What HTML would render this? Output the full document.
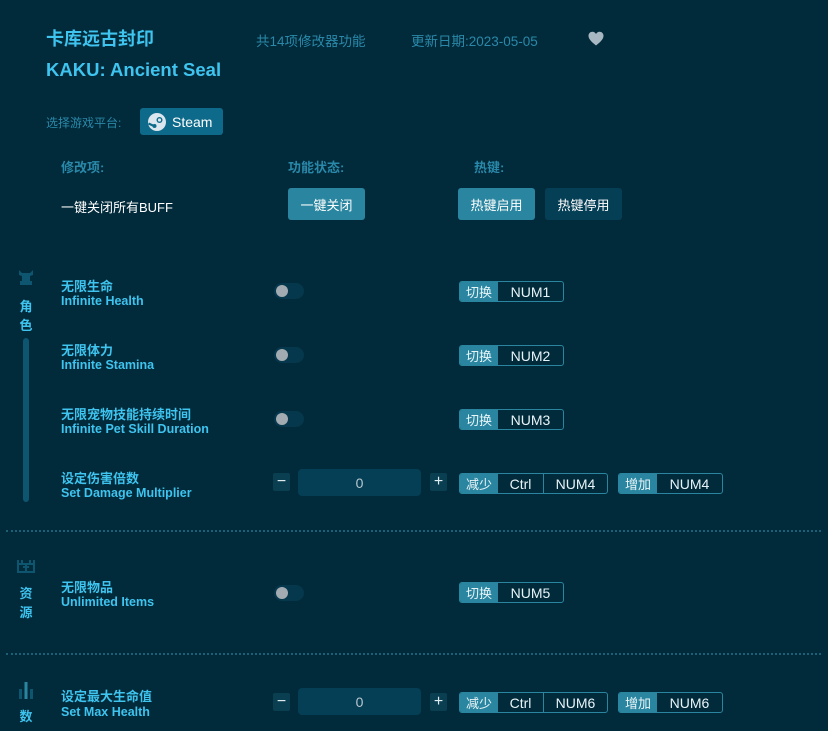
<!DOCTYPE html>
<html><head><meta charset="utf-8"><style>
*{margin:0;padding:0;box-sizing:border-box}
body{width:828px;height:731px;background:#012a3a;font-family:"Liberation Sans","Noto Sans CJK SC",sans-serif;position:relative;overflow:hidden;color:#fff}
.a{position:absolute;white-space:nowrap}
.t{color:#3ec4ef;font-weight:bold;font-size:18px}
.m{color:#2a89aa;font-size:13.5px}
.h{color:#2a89aa;font-size:13px;font-weight:bold}
.cn{color:#3ec4ef;font-size:13px;font-weight:bold}
.en{color:#3ec4ef;font-size:12.5px;font-weight:bold}
.btn{position:absolute;border-radius:3px;color:#fff;font-size:13px;display:flex;align-items:center;justify-content:center}
.tg{position:absolute;width:30px;height:16px;border-radius:8px;background:#05384c}
.tg:after{content:"";position:absolute;left:2px;top:2px;width:12px;height:12px;border-radius:6px;background:#a3abb2}
.hk{position:absolute;height:21px;border:1px solid #2a86a0;border-radius:3px;display:flex;font-size:14px;color:#e8f4f8;overflow:hidden}
.hk span{display:flex;align-items:center;justify-content:center;height:100%}
.hk .l{background:#2a86a0;width:38px;font-size:13px}
.hk .s{border-left:1px solid #2a86a0}
.sq{position:absolute;width:17px;height:18px;background:#0a3f52;border-radius:2px;color:#e0eef2;font-size:16px;display:flex;align-items:center;justify-content:center}
.inp{position:absolute;width:123px;height:27px;background:#053f55;border-radius:4px;color:#b8c8d0;font-size:14px;display:flex;align-items:center;justify-content:center}
.dv{position:absolute;left:6px;width:815px;border-top:2px dotted #1e5f78}
.sc{position:absolute;left:18px;width:16px;text-align:center;color:#3ec4ef;font-size:13px;font-weight:bold;line-height:19px}
</style></head><body>
<div class="a t" style="left:46px;top:25px">卡库远古封印</div>
<div class="a t" style="left:46px;top:59px;font-size:18.5px">KAKU: Ancient Seal</div>
<div class="a m" style="left:256px;top:30px">共14项修改器功能</div>
<div class="a m" style="left:411px;top:30px">更新日期:2023-05-05</div>
<svg class="a" style="left:588px;top:31px" width="16" height="15" viewBox="0 0 16 15"><path d="M8 14.5C3 10.5 0.5 8 0.5 4.8 0.5 2.5 2.3 0.8 4.4 0.8 6 0.8 7.3 1.8 8 3 8.7 1.8 10 0.8 11.6 0.8 13.7 0.8 15.5 2.5 15.5 4.8 15.5 8 13 10.5 8 14.5Z" fill="#a8b8c2"/></svg>
<div class="a m" style="left:46px;top:114px;font-size:12px">选择游戏平台:</div>
<div class="btn" style="left:140px;top:108px;width:83px;height:27px;background:#0e6a8a;font-size:14px;justify-content:flex-start;padding-left:8px"><svg width="18" height="18" viewBox="0 0 18 18" style="margin-right:6px"><circle cx="9" cy="9" r="9" fill="#dce6ee"/><circle cx="11.5" cy="7" r="3" fill="#0e6a8a"/><circle cx="11.5" cy="7" r="1.6" fill="#dce6ee"/><path d="M0.5 10.5L6 13" stroke="#0e6a8a" stroke-width="2.2"/><circle cx="6.5" cy="13" r="2" fill="#0e6a8a"/></svg>Steam</div>
<div class="a h" style="left:61px;top:157px">修改项:</div>
<div class="a h" style="left:288px;top:157px">功能状态:</div>
<div class="a h" style="left:474px;top:157px">热键:</div>
<div class="a" style="left:61px;top:197px;font-size:13px">一键关闭所有BUFF</div>
<div class="btn" style="left:288px;top:188px;width:77px;height:32px;background:#2a86a0">一键关闭</div>
<div class="btn" style="left:458px;top:188px;width:77px;height:32px;background:#2a86a0">热键启用</div>
<div class="btn" style="left:545px;top:188px;width:77px;height:32px;background:#053f55">热键停用</div>

<svg class="a" style="left:17px;top:270px" width="18" height="16" viewBox="0 0 18 16"><path d="M2 0L5 3H13L16 0V5L13 6V11H15V15H3V11H5V6L2 5Z" fill="#0e5670"/></svg>
<div class="sc" style="top:297px">角<br>色</div>
<div class="a" style="left:23px;top:338px;width:6px;height:164px;border-radius:3px;background:#0e5670"></div>

<div class="a cn" style="left:61px;top:276px">无限生命</div><div class="a en" style="left:61px;top:294px">Infinite Health</div>
<div class="tg" style="left:274px;top:283px"></div>
<div class="hk" style="left:459px;top:281px;width:105px"><span class="l">切换</span><span style="flex:1">NUM1</span></div>

<div class="a cn" style="left:61px;top:340px">无限体力</div><div class="a en" style="left:61px;top:358px">Infinite Stamina</div>
<div class="tg" style="left:274px;top:347px"></div>
<div class="hk" style="left:459px;top:345px;width:105px"><span class="l">切换</span><span style="flex:1">NUM2</span></div>

<div class="a cn" style="left:61px;top:404px">无限宠物技能持续时间</div><div class="a en" style="left:61px;top:422px">Infinite Pet Skill Duration</div>
<div class="tg" style="left:274px;top:411px"></div>
<div class="hk" style="left:459px;top:409px;width:105px"><span class="l">切换</span><span style="flex:1">NUM3</span></div>

<div class="a cn" style="left:61px;top:468px">设定伤害倍数</div><div class="a en" style="left:61px;top:486px">Set Damage Multiplier</div>
<div class="sq" style="left:273px;top:473px">−</div>
<div class="inp" style="left:298px;top:469px">0</div>
<div class="sq" style="left:430px;top:473px">+</div>
<div class="hk" style="left:459px;top:473px;width:149px"><span class="l">减少</span><span style="width:45px">Ctrl</span><span class="s" style="flex:1">NUM4</span></div>
<div class="hk" style="left:618px;top:473px;width:105px"><span class="l">增加</span><span style="flex:1">NUM4</span></div>

<div class="dv" style="top:530px"></div>

<svg class="a" style="left:17px;top:559px" width="18" height="14" viewBox="0 0 18 14"><path d="M1 1V13H17V1M1 5H17M5 1V4M13 1V4M6 8H12M9 5V13" stroke="#0e5670" stroke-width="2" fill="none"/></svg>
<div class="sc" style="top:584px">资<br>源</div>
<div class="a cn" style="left:61px;top:577px">无限物品</div><div class="a en" style="left:61px;top:595px">Unlimited Items</div>
<div class="tg" style="left:274px;top:585px"></div>
<div class="hk" style="left:459px;top:582px;width:105px"><span class="l">切换</span><span style="flex:1">NUM5</span></div>

<div class="dv" style="top:653px"></div>

<svg class="a" style="left:17px;top:681px" width="18" height="18" viewBox="0 0 18 18"><rect x="2" y="8" width="3" height="10" fill="#0e5670"/><rect x="7.5" y="1" width="3" height="17" fill="#2a86a0"/><rect x="13" y="8" width="3" height="10" fill="#0e5670"/></svg>
<div class="sc" style="top:707px">数</div>
<div class="a cn" style="left:61px;top:686px">设定最大生命值</div><div class="a en" style="left:61px;top:705px">Set Max Health</div>
<div class="sq" style="left:273px;top:693px">−</div>
<div class="inp" style="left:298px;top:688px">0</div>
<div class="sq" style="left:430px;top:693px">+</div>
<div class="hk" style="left:459px;top:692px;width:149px"><span class="l">减少</span><span style="width:45px">Ctrl</span><span class="s" style="flex:1">NUM6</span></div>
<div class="hk" style="left:618px;top:692px;width:105px"><span class="l">增加</span><span style="flex:1">NUM6</span></div>
</body></html>
